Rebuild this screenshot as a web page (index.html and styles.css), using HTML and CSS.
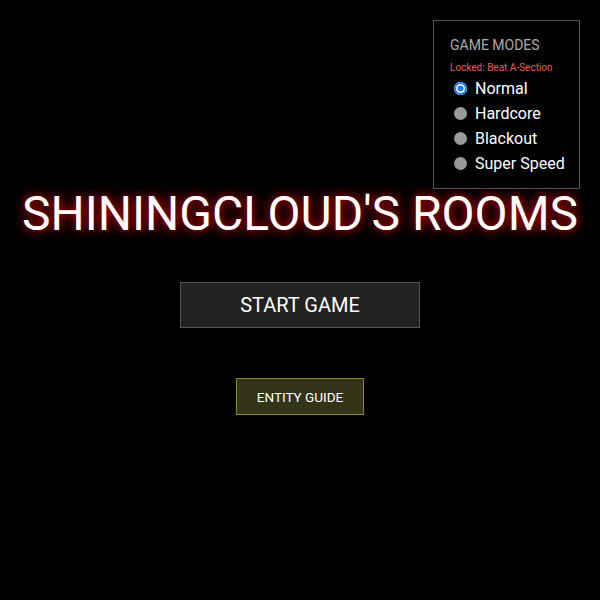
FILE: index.html
```html
<!DOCTYPE html>
<html lang="en">
<head>
    <meta charset="UTF-8">
    <meta name="viewport" content="width=device-width, initial-scale=1.0">
    <title>Shiningcloud's Rooms</title>
    <link rel="stylesheet" href="styles.css">
</head>
<body>
    <!-- Mode picker -->
    <div class="mode-panel">
        <div class="mode-title">GAME MODES</div>
        <div class="mode-lock">Locked: Beat A-Section</div>
        <label class="mode-option"><input type="radio" name="mode" checked> Normal</label>
        <label class="mode-option"><input type="radio" name="mode" disabled> Hardcore</label>
        <label class="mode-option"><input type="radio" name="mode" disabled> Blackout</label>
        <label class="mode-option"><input type="radio" name="mode" disabled> Super Speed</label>
    </div>

    <!-- Title screen -->
    <div class="menu">
        <h1 class="game-title">SHININGCLOUD'S ROOMS</h1>
        <button class="start-button">START GAME</button>
        <button class="guide-button">ENTITY GUIDE</button>
    </div>
</body>
</html>
```

FILE: styles.css
```css
/* Global */
body {
    margin: 0;
    padding: 0;
    background: #000;
    color: #fff;
    font-family: Roboto, "Liberation Sans", sans-serif;
    overflow: hidden;
}

/* Title screen */
.menu {
    display: flex;
    flex-direction: column;
    align-items: center;
    padding-top: 184px;
}

.game-title {
    margin: 0;
    font-size: 48px;
    font-weight: 400;
    line-height: 60px;
    white-space: nowrap;
    color: #fff;
    text-shadow: 0 0 8px #c00000, 0 0 16px #7a0000;
}

.start-button {
    margin-top: 38px;
    width: 240px;
    height: 46px;
    background: #222;
    border: 1px solid #555;
    color: #fff;
    font-family: inherit;
    font-size: 20px;
    cursor: pointer;
}

.guide-button {
    margin-top: 50px;
    width: 128px;
    height: 37px;
    background: #333318;
    border: 1px solid #8c8c2c;
    color: #fff;
    font-family: inherit;
    font-size: 13.5px;
    cursor: pointer;
}

/* Mode picker */
.mode-panel {
    position: fixed;
    top: 20px;
    right: 20px;
    width: 147px;
    box-sizing: border-box;
    padding: 16px 10px 12px 16px;
    border: 1px solid #555;
    background: #000;
}

.mode-title {
    font-size: 14px;
    color: #aaa;
    line-height: 16px;
}

.mode-lock {
    margin-top: 9px;
    font-size: 10px;
    color: #e06060;
    line-height: 12px;
}

.mode-option {
    display: flex;
    align-items: center;
    gap: 8px;
    height: 25px;
    font-size: 16px;
    color: #fff;
}

.mode-option:first-of-type {
    margin-top: 2px;
}

.mode-option input {
    appearance: none;
    margin: 0 0 0 4px;
    width: 13px;
    height: 13px;
    border-radius: 50%;
    background: #9a9a9a;
}

.mode-option input:checked {
    background: #1a7ef0;
    box-shadow: inset 0 0 0 2px #1a7ef0, inset 0 0 0 3.5px #fff;
}
```
